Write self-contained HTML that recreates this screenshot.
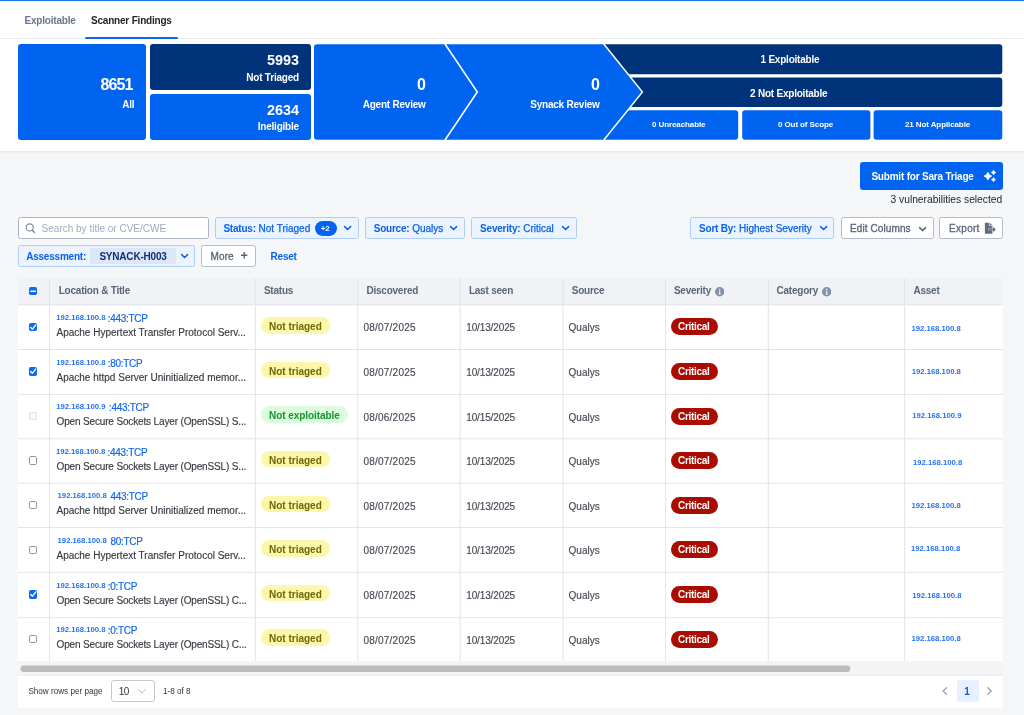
<!DOCTYPE html>
<html lang="en">
<head>
<meta charset="utf-8">
<title>Scanner Findings</title>
<style>
*{box-sizing:border-box;margin:0;padding:0}
html,body{width:1024px;height:715px;overflow:hidden}
body{background:#f5f6f8;font-family:"Liberation Sans",Arial,sans-serif;font-size:10px;color:#333;position:relative}
#root{position:absolute;left:0;top:0;width:1024px;height:715px;will-change:transform}
.abs{position:absolute}
.t{position:absolute;white-space:nowrap;line-height:1}
.b{font-weight:bold;letter-spacing:-.2px}
/* top */
#topline{left:0;top:0;width:1024px;height:1.2px;background:#1c74f3}
#header{left:0;top:0;width:1024px;height:151.5px;background:#fff;border-bottom:1px solid #e8eaee;box-shadow:0 1px 2px rgba(20,30,50,.05)}
#tabborder{left:0;top:37.7px;width:1024px;height:1px;background:#e7e9ec}
#tabline{left:85px;top:36.5px;width:93px;height:2px;background:#0b68f3;border-radius:1px}
.tab{top:15.8px;font-size:10px;font-weight:bold;letter-spacing:-.2px}
/* stat boxes */
.box{position:absolute;border-radius:3px;background:#0064f0;color:#fff}
.navy{background:#00337a}
.num{font-size:16px;font-weight:bold;color:#fff}
.num2{font-size:14.4px;font-weight:bold;color:#fff}
.lbl{font-size:10px;font-weight:bold;color:#fff;letter-spacing:-.22px}
.sm{font-size:8px;font-weight:bold;color:#fff;letter-spacing:-.1px}

/* toolbar */
.btn-primary{position:absolute;background:#0064f0;border-radius:3px}
.chip{position:absolute;height:22px;border:1px solid #aecdfb;background:#ebf3fe;border-radius:2.5px}
.wbtn{position:absolute;height:22px;border:1px solid #b3bccb;background:#fff;border-radius:2.5px}
.cb{color:#0a62ea;font-weight:bold;letter-spacing:-.22px}
.cv{color:#0a62ea;font-weight:normal;-webkit-text-stroke:.25px #0a62ea}
.gt{color:#596478;font-weight:normal;-webkit-text-stroke:.3px #596478;letter-spacing:.1px}
.chev{position:absolute;overflow:visible}

/* table */
#tbl{position:absolute;left:18px;top:277.5px;width:984.6px;height:384.6px;background:#fff;overflow:hidden}
#thead{position:absolute;left:0;top:0;width:100%;height:27px;background:#f0f2f5}
.th{position:absolute;top:8.7px;letter-spacing:-.22px;font-weight:bold;color:#5b6577;line-height:1;white-space:nowrap}
.vsep{position:absolute;top:0;width:1px;height:384px;background:#e4e7eb}
.row{position:absolute;left:0;width:100%;height:44.6px}
.row span,.row div{position:absolute;white-space:nowrap;line-height:1}
.ip{font-size:7.7px;font-weight:bold;color:#2272f3;top:9.7px}
.port{font-size:10px;color:#1467ee;top:9.7px;letter-spacing:-.3px;-webkit-text-stroke:.2px #1467ee}
.ttl{left:38.5px;top:23.7px;font-size:10px;color:#353a42;-webkit-text-stroke:.15px #353a42}
.pill{left:242.6px;top:12.9px;height:16.5px;border-radius:8.3px;font-weight:bold;line-height:20.3px!important;padding:0 8.4px;overflow:visible}
.nt{background:#fcf7aa;color:#6d6805}
.ne{background:#dcfbdf;color:#14962b;letter-spacing:-.06px}
.cell{top:19px;color:#454b55;-webkit-text-stroke:.15px #454b55}
.crit{left:652.9px;top:14px;height:17.2px;border-radius:8.6px;background:#b00b0b;color:#fff;font-weight:bold;line-height:18.2px!important;padding:0 7.2px;letter-spacing:-.3px;width:47.3px;background:#ab0c02}
.asset{left:893.8px;top:21.2px;font-size:7.7px;font-weight:bold;color:#2272f3}
.ck{left:10.9px;top:18.3px;width:8.4px;height:8.4px;border-radius:1.8px}
.ck.on{background:#0b6bf5}
.ck.off{background:#fff;border:1px solid #8f96a1}
.ck.dis{background:#f5f6f8;border:1px solid #dde0e6}
.ck svg{position:absolute;left:0;top:0}
.info{position:absolute;top:9.7px;width:9.4px;height:9.4px}
</style>
</head>
<body>
<div id="root">
<div id="header" class="abs"></div>
<div id="topline" class="abs"></div>
<div id="tabborder" class="abs"></div>
<div id="tabline" class="abs"></div>
<span class="t tab" style="left:24.5px;color:#6d778a">Exploitable</span>
<span class="t tab" style="left:91px;color:#20242b">Scanner Findings</span>

<!-- STATS -->
<div class="box" style="left:18px;top:44.3px;width:128px;height:95.5px"></div>
<div class="box navy" style="left:150px;top:44.3px;width:161px;height:45.7px"></div>
<div class="box" style="left:150px;top:94px;width:161px;height:45.8px"></div>
<span class="t num" style="right:891.4px;top:76.6px;letter-spacing:-.85px">8651</span>
<span class="t lbl" style="right:889.7px;top:99.8px">All</span>
<span class="t num2" style="right:725px;top:53.1px">5993</span>
<span class="t lbl" style="right:725.1px;top:72.8px">Not Triaged</span>
<span class="t num2" style="right:725px;top:102.8px">2634</span>
<span class="t lbl" style="right:725.1px;top:122.2px">Ineligible</span>

<!--PIPELINE-->
<svg class="abs" style="left:0;top:0" width="1024" height="160" viewBox="0 0 1024 160">
  <defs>
    <clipPath id="rc"><polygon points="604.8,44 643.3,92 604.8,140 1010,140 1010,44"/></clipPath>
  </defs>
  <path d="M317,44.3 H603 L641.5,92 L603,139.8 H317 a3,3 0 0 1 -3,-3 V47.3 a3,3 0 0 1 3,-3 Z" fill="#0064f0"/>
  <polyline points="445,44 477.3,92 445,140" fill="none" stroke="#fff" stroke-width="1.6"/>
  <g clip-path="url(#rc)">
    <rect x="578" y="44.3" width="424.3" height="30" rx="3" fill="#00337a"/>
    <rect x="578" y="77.4" width="424.3" height="29.6" rx="3" fill="#00337a"/>
    <rect x="600" y="110.2" width="138.2" height="29.6" rx="3" fill="#0064f0"/>
    <rect x="742.2" y="110.2" width="128.2" height="29.6" rx="3" fill="#0064f0"/>
    <rect x="873.6" y="110.2" width="128.7" height="29.6" rx="3" fill="#0064f0"/>
  </g>
</svg>
<span class="t num" style="right:598px;top:76.7px">0</span>
<span class="t lbl" style="right:598.4px;top:100px">Agent Review</span>
<span class="t num" style="right:424px;top:76.7px">0</span>
<span class="t lbl" style="right:424.4px;top:100px">Synack Review</span>
<span class="t lbl" style="left:760.5px;top:55.3px">1 Exploitable</span>
<span class="t lbl" style="left:750px;top:88.6px">2 Not Exploitable</span>
<span class="t sm" style="left:652px;top:120.6px">0 Unreachable</span>
<span class="t sm" style="left:778px;top:120.5px">0 Out of Scope</span>
<span class="t sm" style="left:905px;top:120.5px">21 Not Applicable</span>
<!--TOOLBAR-->
<div class="btn-primary" style="left:859.8px;top:162.1px;width:143.1px;height:27.6px"></div>
<span class="t b" style="left:871.4px;top:172.4px;color:#fff">Submit for Sara Triage</span>
<svg class="abs" style="left:982px;top:168px" width="16" height="16" viewBox="982 168 16 16">
  <path d="M987.9,172.20 Q988.95,175.05 991.80,176.1 Q988.95,177.15 987.9,180.00 Q986.85,177.15 984.00,176.1 Q986.85,175.05 987.9,172.20 Z" fill="#fff" stroke="#fff" stroke-width="0.7" stroke-linejoin="round"/>
  <path d="M993.5,170.15 Q994.13,171.87 995.85,172.5 Q994.13,173.13 993.5,174.85 Q992.87,173.13 991.15,172.5 Q992.87,171.87 993.5,170.15 Z" fill="#fff" stroke="#fff" stroke-width="0.6" stroke-linejoin="round"/>
  <path d="M993.5,177.60 Q994.07,179.13 995.60,179.7 Q994.07,180.27 993.5,181.80 Q992.93,180.27 991.40,179.7 Q992.93,179.13 993.5,177.60 Z" fill="#fff" stroke="#fff" stroke-width="0.6" stroke-linejoin="round"/>
</svg>
<span class="t" style="right:21.8px;top:195.2px;color:#22262c;font-size:10.25px">3 vulnerabilities selected</span>

<div class="wbtn" style="left:18.1px;top:217px;width:191px;border-color:#aab3c3"></div>
<svg class="abs" style="left:24px;top:221px" width="13" height="13" viewBox="24 221 13 13"><circle cx="29.7" cy="227.4" r="3.55" fill="none" stroke="#7a8497" stroke-width="1.15"/><line x1="32.4" y1="230.2" x2="34.5" y2="232.4" stroke="#7a8497" stroke-width="1.4" stroke-linecap="round"/></svg>
<span class="t" style="left:41.6px;top:224.4px;color:#a2aaba">Search by title or CVE/CWE</span>

<div class="chip" style="left:214.7px;top:217px;width:144.2px"></div>
<span class="t" style="left:223.4px;top:224.4px"><span class="cb">Status:</span> <span class="cv">Not Triaged</span></span>
<div class="abs" style="left:314.5px;top:220.9px;width:22.5px;height:14.7px;border-radius:7.4px;background:#0064f0"></div>
<span class="t b" style="left:320.8px;top:224.6px;font-size:8px;color:#fff">+2</span>
<svg class="chev" style="left:344px;top:226.3px" width="7.2" height="4.4" viewBox="0 0 7.2 4.4"><polyline points="0.6,0.6 3.6,3.6 6.6,0.6" fill="none" stroke="#0a62ea" stroke-width="1.5" stroke-linecap="round" stroke-linejoin="round"/></svg>
<div class="chip" style="left:365.3px;top:217px;width:99.3px"></div>
<span class="t" style="left:373.7px;top:224.4px"><span class="cb">Source:</span> <span class="cv">Qualys</span></span>
<svg class="chev" style="left:449.9px;top:226.3px" width="7.2" height="4.4" viewBox="0 0 7.2 4.4"><polyline points="0.6,0.6 3.6,3.6 6.6,0.6" fill="none" stroke="#0a62ea" stroke-width="1.5" stroke-linecap="round" stroke-linejoin="round"/></svg>
<div class="chip" style="left:471.2px;top:217px;width:106px"></div>
<span class="t" style="left:480.1px;top:224.4px"><span class="cb">Severity:</span> <span class="cv">Critical</span></span>
<svg class="chev" style="left:562.4px;top:226.3px" width="7.2" height="4.4" viewBox="0 0 7.2 4.4"><polyline points="0.6,0.6 3.6,3.6 6.6,0.6" fill="none" stroke="#0a62ea" stroke-width="1.5" stroke-linecap="round" stroke-linejoin="round"/></svg>
<div class="chip" style="left:690.1px;top:217px;width:144.4px"></div>
<span class="t" style="left:699.1px;top:224.4px"><span class="cb">Sort By:</span> <span class="cv">Highest Severity</span></span>
<svg class="chev" style="left:819.7px;top:226.3px" width="7.2" height="4.4" viewBox="0 0 7.2 4.4"><polyline points="0.6,0.6 3.6,3.6 6.6,0.6" fill="none" stroke="#0a62ea" stroke-width="1.5" stroke-linecap="round" stroke-linejoin="round"/></svg>
<div class="wbtn" style="left:841.2px;top:217px;width:92.8px"></div>
<span class="t gt" style="left:850px;top:224.4px">Edit Columns</span>
<svg class="chev" style="left:919.2px;top:226.6px" width="7.2" height="4.4" viewBox="0 0 7.2 4.4"><polyline points="0.6,0.6 3.6,3.6 6.6,0.6" fill="none" stroke="#596478" stroke-width="1.5" stroke-linecap="round" stroke-linejoin="round"/></svg>
<div class="wbtn" style="left:939.4px;top:217px;width:63.3px"></div>
<span class="t gt" style="left:949px;top:224.4px;letter-spacing:.3px">Export</span>
<svg class="abs" style="left:984px;top:221px" width="13" height="14" viewBox="984 221 13 14">
  <path d="M985.6,222.7 H989.6 L992.4,225.5 V233.8 H985.6 a0.7,0.7 0 0 1 -0.7,-0.7 V223.4 a0.7,0.7 0 0 1 0.7,-0.7 Z" fill="#5f6a80"/>
  <path d="M989.3,222.7 V225.8 H992.4" fill="none" stroke="#fff" stroke-width="0.7"/>
  <rect x="988.5" y="228.6" width="4.5" height="1.6" fill="#fff"/>
  <rect x="989" y="228.9" width="4.2" height="1" fill="#5f6a80"/>
  <path d="M993,226.9 L995.9,229.4 L993,231.9 Z" fill="#5f6a80"/>
</svg>

<div class="chip" style="left:18.1px;top:245px;width:177.3px;height:22px"></div>
<span class="t cb" style="left:26.2px;top:251.9px">Assessment:</span>
<div class="abs" style="left:89.5px;top:247.8px;width:86.4px;height:16px;background:#dbe7f9;border-radius:1.5px"></div>
<span class="t b" style="left:99.4px;top:251.9px;color:#0d2f6e">SYNACK-H003</span>
<svg class="chev" style="left:180.6px;top:253.8px" width="7.2" height="4.4" viewBox="0 0 7.2 4.4"><polyline points="0.6,0.6 3.6,3.6 6.6,0.6" fill="none" stroke="#0a62ea" stroke-width="1.5" stroke-linecap="round" stroke-linejoin="round"/></svg>
<div class="wbtn" style="left:201px;top:245px;width:55.3px;height:22px"></div>
<span class="t gt" style="left:210.6px;top:251.9px">More</span>
<svg class="abs" style="left:240px;top:251.3px" width="9" height="9" viewBox="0 0 9 9"><path d="M4.2,1 V7.4 M1,4.2 H7.4" stroke="#596478" stroke-width="1.4" fill="none"/></svg>
<span class="t cb" style="left:270.6px;top:251.9px">Reset</span>
<!--TABLE-->
<div id="tbl">
<div id="thead"></div>
<svg class="abs" style="left:0;top:0;pointer-events:none" width="984.6" height="384.6" viewBox="18 277.5 984.6 384.6">
<line x1="49.6" y1="277.5" x2="49.6" y2="662" stroke="#e1e4e9" stroke-width="1"/>
<line x1="255.4" y1="277.5" x2="255.4" y2="662" stroke="#e1e4e9" stroke-width="1"/>
<line x1="357.8" y1="277.5" x2="357.8" y2="662" stroke="#e1e4e9" stroke-width="1"/>
<line x1="460.2" y1="277.5" x2="460.2" y2="662" stroke="#e1e4e9" stroke-width="1"/>
<line x1="563" y1="277.5" x2="563" y2="662" stroke="#e1e4e9" stroke-width="1"/>
<line x1="665.6" y1="277.5" x2="665.6" y2="662" stroke="#e1e4e9" stroke-width="1"/>
<line x1="768.3" y1="277.5" x2="768.3" y2="662" stroke="#e1e4e9" stroke-width="1"/>
<line x1="904.6" y1="277.5" x2="904.6" y2="662" stroke="#e1e4e9" stroke-width="1"/>
<line x1="18" y1="304.30" x2="1002.6" y2="304.30" stroke="#e1e4e9" stroke-width="1"/>
<line x1="18" y1="349.00" x2="1002.6" y2="349.00" stroke="#e1e4e9" stroke-width="1"/>
<line x1="18" y1="393.90" x2="1002.6" y2="393.90" stroke="#e1e4e9" stroke-width="1"/>
<line x1="18" y1="438.30" x2="1002.6" y2="438.30" stroke="#e1e4e9" stroke-width="1"/>
<line x1="18" y1="482.70" x2="1002.6" y2="482.70" stroke="#e1e4e9" stroke-width="1"/>
<line x1="18" y1="527.00" x2="1002.6" y2="527.00" stroke="#e1e4e9" stroke-width="1"/>
<line x1="18" y1="571.80" x2="1002.6" y2="571.80" stroke="#e1e4e9" stroke-width="1"/>
<line x1="18" y1="617.20" x2="1002.6" y2="617.20" stroke="#e1e4e9" stroke-width="1"/>
<line x1="18" y1="661.40" x2="1002.6" y2="661.40" stroke="#e1e4e9" stroke-width="1"/>
</svg>
<div class="ck on" style="position:absolute;left:10.8px;top:9.4px"><svg width="8.4" height="8.4" viewBox="0 0 8.4 8.4"><line x1="2" y1="4.2" x2="6.4" y2="4.2" stroke="#fff" stroke-width="1.4" stroke-linecap="round"/></svg></div>
<span class="th" style="left:40.7px">Location &amp; Title</span>
<span class="th" style="left:245.9px">Status</span>
<span class="th" style="left:348.4px">Discovered</span>
<span class="th" style="left:450.9px">Last seen</span>
<span class="th" style="left:553.7px">Source</span>
<span class="th" style="left:655.9px">Severity</span>
<span class="th" style="left:758.5px">Category</span>
<span class="th" style="left:895.4px">Asset</span>
<svg class="info" style="left:696.7px" viewBox="0 0 10 10"><circle cx="5" cy="5" r="5" fill="#8290a9"/><path d="M4.2,4.2 H5.6 V7.2 H6.3 V7.9 H3.9 V7.2 H4.5 V4.9 H4.2 Z" fill="#fff"/><circle cx="5" cy="2.7" r="0.85" fill="#fff"/></svg>
<svg class="info" style="left:804.1px" viewBox="0 0 10 10"><circle cx="5" cy="5" r="5" fill="#8290a9"/><path d="M4.2,4.2 H5.6 V7.2 H6.3 V7.9 H3.9 V7.2 H4.5 V4.9 H4.2 Z" fill="#fff"/><circle cx="5" cy="2.7" r="0.85" fill="#fff"/></svg>
<div class="row" style="top:26.80px"><div class="ck on"><svg width="8.4" height="8.4" viewBox="0 0 8.4 8.4"><polyline points="1.7,4.5 3.4,6.2 6.8,2" fill="none" stroke="#fff" stroke-width="1.3" stroke-linecap="round" stroke-linejoin="round"/></svg></div><span class="ip" style="left:38.3px">192.168.100.8</span><span class="port" style="left:89.8px">:443:TCP</span><span class="ttl">Apache Hypertext Transfer Protocol Serv...</span><span class="pill nt">Not triaged</span><span class="cell" style="left:345.5px;letter-spacing:.22px">08/07/2025</span><span class="cell" style="left:448.2px;letter-spacing:-.12px">10/13/2025</span><span class="cell" style="left:550.6px">Qualys</span><span class="crit">Critical</span><span class="asset" style="left:893.5px;top:21.1px">192.168.100.8</span></div>
<div class="row" style="top:71.40px"><div class="ck on"><svg width="8.4" height="8.4" viewBox="0 0 8.4 8.4"><polyline points="1.7,4.5 3.4,6.2 6.8,2" fill="none" stroke="#fff" stroke-width="1.3" stroke-linecap="round" stroke-linejoin="round"/></svg></div><span class="ip" style="left:38.3px">192.168.100.8</span><span class="port" style="left:89.8px">:80:TCP</span><span class="ttl">Apache httpd Server Uninitialized memor...</span><span class="pill nt">Not triaged</span><span class="cell" style="left:345.5px;letter-spacing:.22px">08/07/2025</span><span class="cell" style="left:448.2px;letter-spacing:-.12px">10/13/2025</span><span class="cell" style="left:550.6px">Qualys</span><span class="crit">Critical</span><span class="asset" style="left:893.7px;top:18.8px">192.168.100.8</span></div>
<div class="row" style="top:116.00px"><div class="ck dis"></div><span class="ip" style="left:38.3px">192.168.100.9</span><span class="port" style="left:91px">:443:TCP</span><span class="ttl" style="letter-spacing:-.15px">Open Secure Sockets Layer (OpenSSL) S...</span><span class="pill ne">Not exploitable</span><span class="cell" style="left:345.5px;letter-spacing:.22px">08/06/2025</span><span class="cell" style="left:448.2px;letter-spacing:-.12px">10/15/2025</span><span class="cell" style="left:550.6px">Qualys</span><span class="crit">Critical</span><span class="asset" style="left:894.3px;top:18.8px">192.168.100.9</span></div>
<div class="row" style="top:160.60px"><div class="ck off"></div><span class="ip" style="left:38px">192.168.100.8</span><span class="port" style="left:89.5px">:443:TCP</span><span class="ttl" style="letter-spacing:-.15px">Open Secure Sockets Layer (OpenSSL) S...</span><span class="pill nt">Not triaged</span><span class="cell" style="left:345.5px;letter-spacing:.22px">08/07/2025</span><span class="cell" style="left:448.2px;letter-spacing:-.12px">10/13/2025</span><span class="cell" style="left:550.6px">Qualys</span><span class="crit">Critical</span><span class="asset" style="left:895px;top:21.3px">192.168.100.8</span></div>
<div class="row" style="top:205.20px"><div class="ck off"></div><span class="ip" style="left:39.6px">192.168.100.8</span><span class="port" style="left:92.5px">443:TCP</span><span class="ttl">Apache httpd Server Uninitialized memor...</span><span class="pill nt">Not triaged</span><span class="cell" style="left:345.5px;letter-spacing:.22px">08/07/2025</span><span class="cell" style="left:448.2px;letter-spacing:-.12px">10/13/2025</span><span class="cell" style="left:550.6px">Qualys</span><span class="crit">Critical</span><span class="asset" style="left:893.5px;top:19.7px">192.168.100.8</span></div>
<div class="row" style="top:249.80px"><div class="ck off"></div><span class="ip" style="left:39.6px">192.168.100.8</span><span class="port" style="left:92.5px">80:TCP</span><span class="ttl">Apache Hypertext Transfer Protocol Serv...</span><span class="pill nt">Not triaged</span><span class="cell" style="left:345.5px;letter-spacing:.22px">08/07/2025</span><span class="cell" style="left:448.2px;letter-spacing:-.12px">10/13/2025</span><span class="cell" style="left:550.6px">Qualys</span><span class="crit">Critical</span><span class="asset" style="left:893px;top:17.4px">192.168.100.8</span></div>
<div class="row" style="top:294.40px"><div class="ck on"><svg width="8.4" height="8.4" viewBox="0 0 8.4 8.4"><polyline points="1.7,4.5 3.4,6.2 6.8,2" fill="none" stroke="#fff" stroke-width="1.3" stroke-linecap="round" stroke-linejoin="round"/></svg></div><span class="ip" style="left:38.3px">192.168.100.8</span><span class="port" style="left:89.8px">:0:TCP</span><span class="ttl" style="letter-spacing:-.15px">Open Secure Sockets Layer (OpenSSL) C...</span><span class="pill nt">Not triaged</span><span class="cell" style="left:345.5px;letter-spacing:.22px">08/07/2025</span><span class="cell" style="left:448.2px;letter-spacing:-.12px">10/13/2025</span><span class="cell" style="left:550.6px">Qualys</span><span class="crit">Critical</span><span class="asset" style="left:894.3px;top:20.2px">192.168.100.8</span></div>
<div class="row" style="top:339.00px"><div class="ck off"></div><span class="ip" style="left:38.3px">192.168.100.8</span><span class="port" style="left:89.8px">:0:TCP</span><span class="ttl" style="letter-spacing:-.15px">Open Secure Sockets Layer (OpenSSL) C...</span><span class="pill nt">Not triaged</span><span class="cell" style="left:345.5px;letter-spacing:.22px">08/07/2025</span><span class="cell" style="left:448.2px;letter-spacing:-.12px">10/13/2025</span><span class="cell" style="left:550.6px">Qualys</span><span class="crit">Critical</span><span class="asset" style="left:893.5px;top:18.6px">192.168.100.8</span></div>
</div>
<!--FOOTER-->
<div class="abs" style="left:18px;top:661.4px;width:984.6px;height:13.4px;background:#f3f4f6"></div>
<svg class="abs" style="left:18px;top:661px" width="985" height="14" viewBox="18 661 985 14"><rect x="20.6" y="665.6" width="829.7" height="6.5" rx="3.25" fill="#bbbcbe"/></svg>
<div class="abs" style="left:18.1px;top:674.6px;width:984.6px;height:33.2px;background:#fff;border-top:1px solid #eceef1"></div>
<span class="t" style="left:28.4px;top:687.7px;font-size:8.15px;color:#30353c">Show rows per page</span>
<div class="abs" style="left:111.2px;top:680.2px;width:43.7px;height:21.4px;border:1px solid #c3c8d0;border-radius:3px;background:#fff"></div>
<span class="t" style="left:118.8px;top:686.8px;font-size:10px;letter-spacing:-.7px;color:#30353c">10</span>
<svg class="chev" style="left:138.1px;top:688.6px" width="8.2" height="4.6" viewBox="0 0 8.2 4.6"><polyline points="0.5,0.5 4.1,4 7.7,0.5" fill="none" stroke="#b4b9c2" stroke-width="1" stroke-linecap="round" stroke-linejoin="round"/></svg>
<span class="t" style="left:163px;top:687.7px;font-size:8.15px;color:#30353c">1-8 of 8</span>
<svg class="chev" style="left:941.6px;top:687.4px" width="5.4" height="8" viewBox="0 0 5.4 8"><polyline points="4.6,0.7 1.1,4 4.6,7.3" fill="none" stroke="#9aa1ad" stroke-width="1.25" stroke-linecap="round" stroke-linejoin="round"/></svg>
<div class="abs" style="left:957px;top:680.2px;width:21.6px;height:21.4px;border-radius:3px;background:#e7f0fe"></div>
<span class="t b" style="left:964.2px;top:686.8px;font-size:10px;color:#0a62ea">1</span>
<svg class="chev" style="left:987.4px;top:687.4px" width="5.4" height="8" viewBox="0 0 5.4 8"><polyline points="0.8,0.7 4.3,4 0.8,7.3" fill="none" stroke="#9aa1ad" stroke-width="1.25" stroke-linecap="round" stroke-linejoin="round"/></svg>
</div>
</body>
</html>
